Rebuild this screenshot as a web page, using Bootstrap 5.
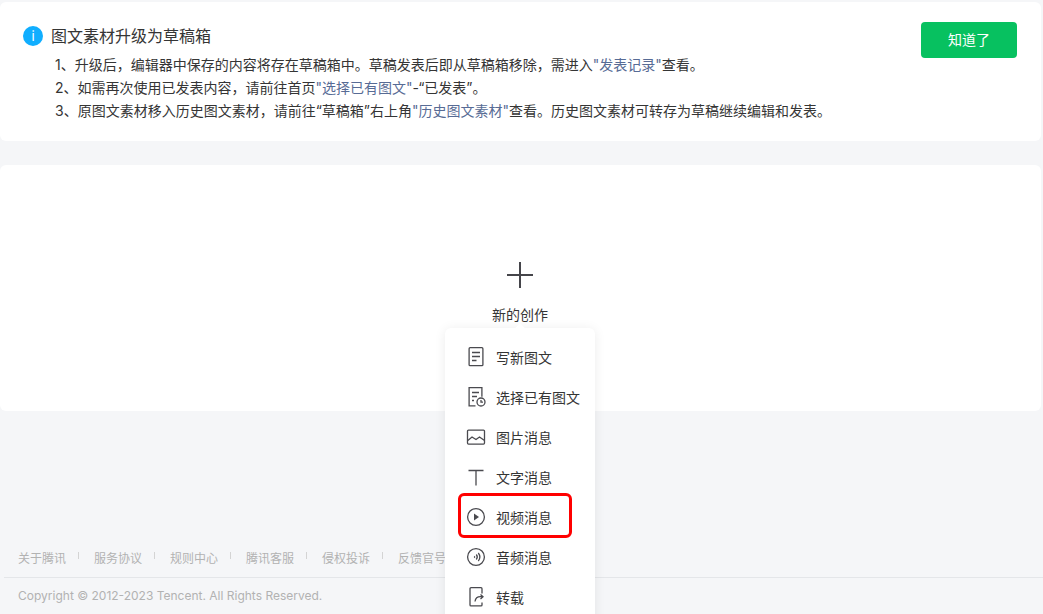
<!DOCTYPE html>
<html lang="zh-CN">
<head>
    <meta charset="UTF-8">
    <title>新的创作</title>
    <meta name="viewport" content="width=device-width, initial-scale=1">
    <link href="https://cdn.jsdelivr.net/npm/bootstrap@5.3.0/dist/css/bootstrap.min.css" rel="stylesheet">
    <style>
        html, body { height: 614px; overflow: hidden; }
        body {
            font-family: Inter, "Noto Sans CJK SC", sans-serif;
            background: #f5f6f8;
            color: #353535;
            font-size: 14px;
            padding-top: 2px;
        }
        .notice-box {
            width: 1041px;
            height: 139px;
            background: #fff;
            border-radius: 6px;
            padding: 20px 24px 0 23px;
        }
        .notice-icon {
            width: 20px;
            height: 20px;
            border-radius: 50%;
            background: #10aeff;
            color: #fff;
            font-size: 13px;
            line-height: 20px;
            text-align: center;
        }
        .notice-title { font-size: 16px; line-height: 28px; margin-left: 8px; }
        .notice-list { margin: 3px 0 0 32px; line-height: 23px; }
        .notice-list a { color: #576b95; text-decoration: none; }
        .ok-btn {
            width: 96px;
            height: 36px;
            padding: 0 0 2px;
            background: #07c160;
            color: #fff;
            border: 0;
            border-radius: 4px;
            font-size: 14px;
        }
        .create-box {
            position: relative;
            width: 1041px;
            height: 246px;
            margin-top: 24px;
            background: #fff;
            border-radius: 6px;
            padding: 96px 1px 0 0;
        }
        .create-label { line-height: 20px; margin-top: 16px; }
        .create-menu {
            position: absolute;
            left: 445px;
            top: 163px;
            width: 150px;
            height: 320px;
            padding-top: 9px;
            background: #fff;
            border-radius: 6px;
            box-shadow: 0 1px 12px rgba(0, 0, 0, .08);
            z-index: 2;
        }
        .create-menu::before {
            content: "";
            position: absolute;
            left: 71px;
            top: -3px;
            width: 8px;
            height: 8px;
            background: #fff;
            transform: rotate(45deg);
        }
        .menu-row { height: 40px; padding-left: 21px; gap: 10px; }
        .menu-row svg { width: 20px; height: 20px; flex: none; fill: none; stroke: #4a4a4f; stroke-width: 1.3; overflow: visible; }
        .menu-mark {
            position: absolute;
            left: 13px;
            top: 165px;
            width: 114px;
            height: 45px;
            border: 3px solid #f00;
            border-radius: 6px;
        }
        .foot-links { margin-top: 139px; padding-left: 18px; font-size: 12px; line-height: 18px; color: #b2b2b2; }
        .foot-links span + span { margin-left: 12px; padding-left: 16px; position: relative; }
        .foot-links span + span::before {
            content: "";
            position: absolute;
            left: 0;
            top: 1px;
            height: 7px;
            border-left: 1px solid #d4d4d4;
        }
        .foot-copy {
            margin: 9px 0 0 4px;
            padding: 9px 0 0 14px;
            border-top: 1px solid #e4e6e9;
            font-size: 12px;
            line-height: 18px;
            color: #b2b2b2;
        }
    </style>
</head>
<body>
    <div class="notice-box d-flex justify-content-between align-items-start">
        <div>
            <div class="d-flex align-items-center">
                <div class="notice-icon">i</div>
                <div class="notice-title">图文素材升级为草稿箱</div>
            </div>
            <div class="notice-list">
                <div>1、升级后，编辑器中保存的内容将存在草稿箱中。草稿发表后即从草稿箱移除，需进入<a href="#">"发表记录"</a>查看。</div>
                <div>2、如需再次使用已发表内容，请前往首页<a href="#">"选择已有图文"</a>-“已发表”。</div>
                <div>3、原图文素材移入历史图文素材，请前往“草稿箱”右上角<a href="#">"历史图文素材"</a>查看。历史图文素材可转存为草稿继续编辑和发表。</div>
            </div>
        </div>
        <button type="button" class="ok-btn">知道了</button>
    </div>

    <div class="create-box text-center">
        <svg width="28" height="28" viewBox="0 0 28 28" class="d-block mx-auto" fill="none" stroke="#45454a" stroke-width="2"><path d="M14 1v26M1 14h26"/></svg>
        <div class="create-label">新的创作</div>
        <div class="create-menu text-start">
            <div class="menu-row d-flex align-items-center">
                <svg viewBox=".5 .5 20 20"><rect x="3.6" y="1.200" width="13.800" height="18" rx="1"/><path d="M6.500 6h8M6.500 10h8M6.500 14h4.500"/></svg>
                <span>写新图文</span>
            </div>
            <div class="menu-row d-flex align-items-center">
                <svg viewBox=".5 .5 20 20"><path d="M10 19.400H3.600V1.200h12.800v9"/><path d="M6.500 6h7M6.500 10h5M6.500 14h2"/><circle cx="15.500" cy="15.500" r="4"/><path d="M15.500 13.500v2.200h2"/></svg>
                <span>选择已有图文</span>
            </div>
            <div class="menu-row d-flex align-items-center">
                <svg viewBox=".5 .5 20 20"><rect x="2" y="3.600" width="17" height="14" rx="1"/><path d="M2.300 14l4.200-3.500 4 2.500 3.500-2.500 5 3.500"/></svg>
                <span>图片消息</span>
            </div>
            <div class="menu-row d-flex align-items-center">
                <svg viewBox=".5 .5 20 20"><path d="M3 4h15M10.500 4v15"/></svg>
                <span>文字消息</span>
            </div>
            <div class="menu-row d-flex align-items-center">
                <svg viewBox=".5 .5 20 20"><circle cx="10.500" cy="10.500" r="8.400"/><path d="M8.500 7l5 3.500-5 3.500z" fill="#4a4a4f" stroke="none"/></svg>
                <span>视频消息</span>
            </div>
            <div class="menu-row d-flex align-items-center">
                <svg viewBox=".5 .5 20 20"><circle cx="10.500" cy="10.500" r="8.400"/><path d="M8.800 9.700a1.200 1.200 0 0 1 0 1.600M10.800 8a4 4 0 0 1 0 5M12.800 6.500a6.500 6.500 0 0 1 0 8"/></svg>
                <span>音频消息</span>
            </div>
            <div class="menu-row d-flex align-items-center">
                <svg viewBox=".5 .5 20 20"><path d="M16.500 7V2.200a1 1 0 0 0-1-1H5.500a1 1 0 0 0-1 1v16.200a1 1 0 0 0 1 1h10a1 1 0 0 0 1-1v-2.400"/><path d="M9.500 15c.4-3.200 2.800-4.800 5.500-4.800h2.500M15 8l2.500 2.200L15 12.400"/></svg>
                <span>转载</span>
            </div>
            <div class="menu-mark"></div>
        </div>
    </div>

    <div class="foot-links">
        <span>关于腾讯</span><span>服务协议</span><span>规则中心</span><span>腾讯客服</span><span>侵权投诉</span><span>反馈官号</span>
    </div>
    <div class="foot-copy">Copyright © 2012-2023 Tencent. All Rights Reserved.</div>

    <script src="https://cdn.jsdelivr.net/npm/bootstrap@5.3.0/dist/js/bootstrap.bundle.min.js"></script>
</body>
</html>
